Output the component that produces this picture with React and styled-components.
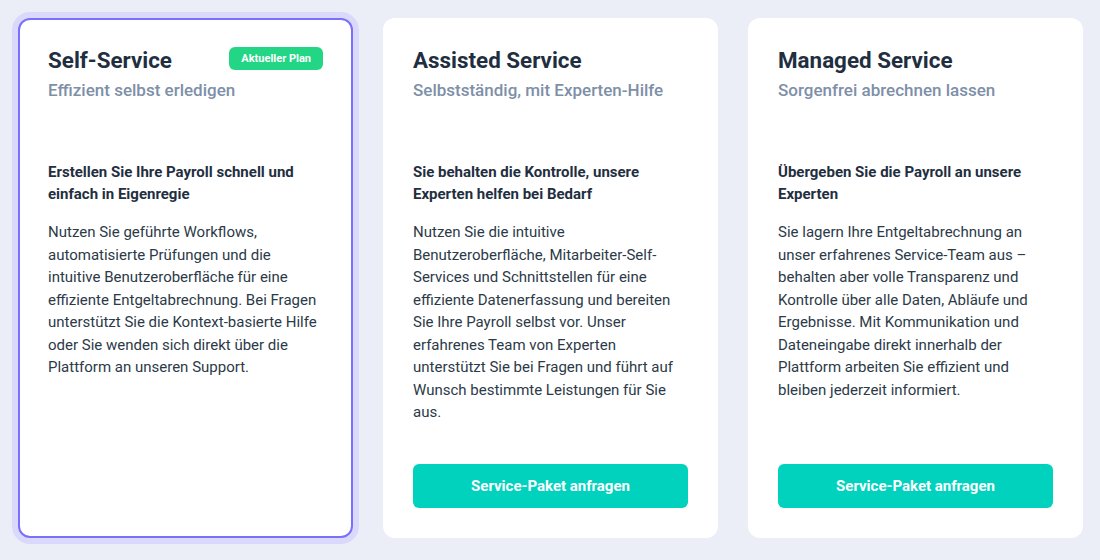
import React from "react";
import styled, { createGlobalStyle } from "styled-components";

const GlobalStyle = createGlobalStyle`
  html, body {
    margin: 0;
    padding: 0;
    background: #eceef7;
  }
  body {
    font-family: Roboto, "Liberation Sans", Arial, sans-serif;
  }
`;

const plans = [
  {
    title: "Self-Service",
    subtitle: "Effizient selbst erledigen",
    lead: "Erstellen Sie Ihre Payroll schnell und einfach in Eigenregie",
    body:
      "Nutzen Sie geführte Workflows, automatisierte Prüfungen und die intuitive Benutzeroberfläche für eine effiziente Entgeltabrechnung. Bei Fragen unterstützt Sie die Kontext-basierte Hilfe oder Sie wenden sich direkt über die Plattform an unseren Support.",
    current: true,
  },
  {
    title: "Assisted Service",
    subtitle: "Selbstständig, mit Experten-Hilfe",
    lead: "Sie behalten die Kontrolle, unsere Experten helfen bei Bedarf",
    body:
      "Nutzen Sie die intuitive Benutzeroberfläche, Mitarbeiter-Self-Services und Schnittstellen für eine effiziente Datenerfassung und bereiten Sie Ihre Payroll selbst vor. Unser erfahrenes Team von Experten unterstützt Sie bei Fragen und führt auf Wunsch bestimmte Leistungen für Sie aus.",
  },
  {
    title: "Managed Service",
    subtitle: "Sorgenfrei abrechnen lassen",
    lead: "Übergeben Sie die Payroll an unsere Experten",
    body:
      "Sie lagern Ihre Entgeltabrechnung an unser erfahrenes Service-Team aus – behalten aber volle Transparenz und Kontrolle über alle Daten, Abläufe und Ergebnisse. Mit Kommunikation und Dateneingabe direkt innerhalb der Plattform arbeiten Sie effizient und bleiben jederzeit informiert.",
  },
];

function PlanCard({ plan }) {
  return (
    <Card $active={plan.current}>
      <Header>
        <Title>{plan.title}</Title>
        {plan.current && <Badge>Aktueller Plan</Badge>}
      </Header>
      <Subtitle>{plan.subtitle}</Subtitle>
      <Lead>{plan.lead}</Lead>
      <Body>{plan.body}</Body>
      {!plan.current && <RequestButton>Service-Paket anfragen</RequestButton>}
    </Card>
  );
}

export default function App() {
  return (
    <>
      <GlobalStyle />
      <Page>
        {plans.map((p) => (
          <PlanCard key={p.title} plan={p} />
        ))}
      </Page>
    </>
  );
}

// ----------------- Styles section ---------------------

const Page = styled.div`
  box-sizing: border-box;
  height: 560px;
  padding: 18px 17px 22px 18px;
  display: grid;
  grid-template-columns: repeat(3, 1fr);
  gap: 30px;
`;

const Card = styled.div`
  box-sizing: border-box;
  background: #ffffff;
  border-radius: 12px;
  display: flex;
  flex-direction: column;
  border: ${(p) => (p.$active ? "2px solid #7a70f9" : "none")};
  padding: ${(p) => (p.$active ? "28px" : "30px")};
  box-shadow: ${(p) => (p.$active ? "0 0 0 6px #dad9fb" : "none")};
`;

const Header = styled.div`
  display: flex;
  align-items: flex-start;
  justify-content: space-between;
`;

const Title = styled.h2`
  margin: 0;
  font-size: 22.4px;
  line-height: 24px;
  font-weight: 700;
  color: #1f2f3f;
`;

const Badge = styled.span`
  margin-top: -1px;
  height: 23px;
  padding: 0 12px;
  display: inline-flex;
  align-items: center;
  border-radius: 6px;
  background: #22d686;
  color: #ffffff;
  font-size: 11px;
  font-weight: 700;
`;

const Subtitle = styled.div`
  margin-top: 6px;
  font-size: 17px;
  line-height: 24px;
  font-weight: 500;
  color: #7e8fa8;
`;

const Lead = styled.div`
  margin-top: 59px;
  font-size: 15px;
  line-height: 22px;
  font-weight: 700;
  color: #1f2f3f;
`;

const Body = styled.p`
  margin: 16px 0 0;
  font-size: 15px;
  line-height: 22.5px;
  color: #2c3a48;
`;

const RequestButton = styled.button`
  margin-top: auto;
  height: 44px;
  width: 100%;
  border: none;
  border-radius: 6px;
  background: #00d2be;
  color: #ffffff;
  font-family: inherit;
  font-size: 15px;
  font-weight: 700;
  cursor: pointer;
`;
